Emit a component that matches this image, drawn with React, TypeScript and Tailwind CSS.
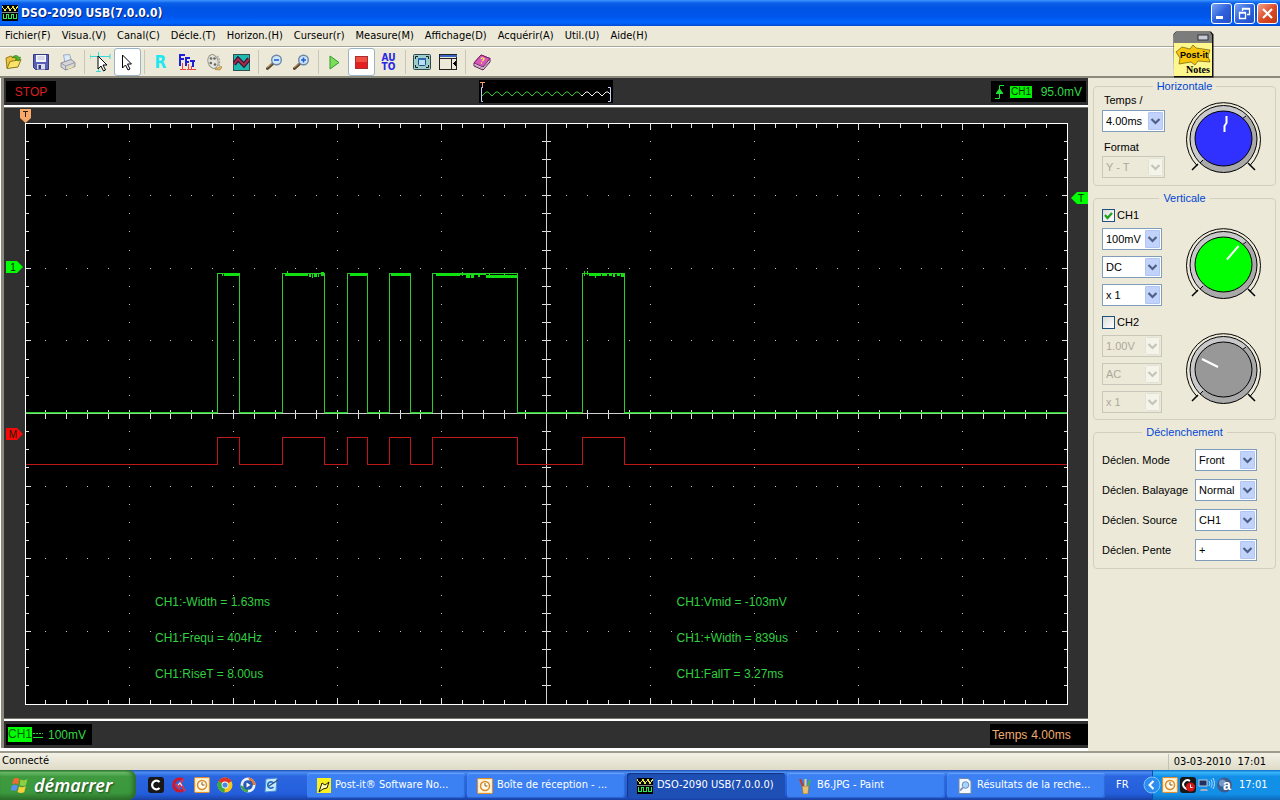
import { ReactNode, useState } from "react";
import clsx from "clsx";

const PLOT_W = 1043;
const PLOT_H = 582;
const DIV_X = 10;
const DIV_Y = 8;

const menus = [
  "Fichier(F)",
  "Visua.(V)",
  "Canal(C)",
  "Décle.(T)",
  "Horizon.(H)",
  "Curseur(r)",
  "Measure(M)",
  "Affichage(D)",
  "Acquérir(A)",
  "Util.(U)",
  "Aide(H)",
];

const measures = [
  ["CH1:-Width = 1.63ms", "CH1:Vmid = -103mV"],
  ["CH1:Frequ = 404Hz", "CH1:+Width = 839us"],
  ["CH1:RiseT = 8.00us", "CH1:FallT = 3.27ms"],
];

// [rise, fall] of every pulse
const pulses = [
  [192, 214],
  [257, 299],
  [322, 342],
  [364, 385],
  [407, 492],
  [557, 599],
];

// noise on the pulse tops: x, y, width, height
const noise = [
  [199, 150, 15, 3],
  [197, 151, 1, 2],
  [260, 150, 17, 3],
  [262, 148, 1, 3],
  [277, 151, 6, 2],
  [284, 150, 2, 4],
  [287, 150, 1, 5],
  [289, 151, 3, 3],
  [293, 150, 1, 4],
  [296, 149, 3, 4],
  [325, 150, 17, 3],
  [366, 150, 19, 3],
  [411, 150, 24, 3],
  [437, 149, 1, 4],
  [435, 151, 26, 1],
  [441, 152, 4, 3],
  [446, 152, 3, 3],
  [453, 152, 2, 2],
  [461, 152, 31, 3],
  [464, 150, 1, 3],
  [479, 150, 1, 3],
  [559, 148, 1, 5],
  [562, 148, 1, 4],
  [564, 150, 12, 3],
  [570, 151, 1, 4],
  [577, 151, 5, 2],
  [584, 150, 3, 3],
  [588, 151, 2, 3],
  [592, 150, 3, 3],
  [596, 151, 3, 3],
];

function pulsePath(base: number, top: number) {
  let d = `M1 ${base}`;
  for (const [a, b] of pulses) {
    d += `H${a + 0.5}V${top}H${b + 0.5}V${base}`;
  }
  return d + `H${PLOT_W - 1}`;
}

function Graticule() {
  const dx = (PLOT_W - 1) / (DIV_X * 5);
  const dy = (PLOT_H - 1) / (DIV_Y * 4);
  const xs = Array.from({ length: DIV_X * 5 - 1 }, (_, i) => i + 1);
  const ys = Array.from({ length: DIV_Y * 4 - 1 }, (_, i) => i + 1);
  let ticks = "";
  let dots = "";
  for (const i of xs) {
    const x = Math.floor(i * dx);
    const len = i % 5 === 0 ? 6 : 4;
    ticks += `M${x} 1h1v${len}h-1zM${x} ${PLOT_H - 1 - len}h1v${len}h-1zM${x} 287h1v9h-1z`;
    for (let r = 1; r < DIV_Y; r++) {
      dots += `M${x} ${Math.floor(r * 4 * dy)}h1v1h-1z`;
    }
  }
  for (const j of ys) {
    const y = Math.floor(j * dy);
    const len = j % 4 === 0 ? 5 : 3;
    ticks += `M1 ${y}h${len}v1h-${len}zM${PLOT_W - 1 - len} ${y}h${len}v1h-${len}zM517 ${y}h9v1h-9z`;
    for (let c = 1; c < DIV_X; c++) {
      dots += `M${Math.floor(c * 5 * dx)} ${y}h1v1h-1z`;
    }
  }
  return (
    <>
      <path d={dots} fill="#c8c8c8" />
      <path d={ticks} fill="#e0e0e0" />
      <path d={`M521 0h1v${PLOT_H}h-1zM0 290h${PLOT_W}v1H0z`} fill="#d0d0d0" />
      <rect x=".5" y=".5" width={PLOT_W - 1} height={PLOT_H - 1} fill="none" stroke="#fff" />
    </>
  );
}

function Plot() {
  const edges = [1, ...pulses.flat(), PLOT_W - 1];
  return (
    <svg
      viewBox={`0 0 ${PLOT_W} ${PLOT_H}`}
      className="block h-auto w-full bg-black"
      shapeRendering="crispEdges"
    >
      <Graticule />
      {edges.map((x, i) =>
        i % 2 === 0 ? (
          <rect key={x} x={x} y="290" width={edges[i + 1] - x} height="1" fill="#7fe07f" />
        ) : null,
      )}
      <path d={pulsePath(341.5, 314.5)} fill="none" stroke="#c01818" />
      <path d={pulsePath(289.5, 150.5)} fill="none" stroke="#2ccc2c" />
      {noise.map(([x, y, w, h]) => (
        <rect key={`${x}-${y}`} x={x} y={y} width={w} height={h} fill="#10e010" />
      ))}
    </svg>
  );
}

function Marker({ label, fill, flip }: { label: string; fill: string; flip?: boolean }) {
  return (
    <svg width="17" height="12" viewBox="0 0 17 12" className="block">
      <path d={flip ? "M17 0H6L0 6l6 6h11z" : "M0 0h11l6 6-6 6H0z"} fill={fill} />
      <text
        x={flip ? 10 : 7}
        y="10"
        fontSize="10"
        textAnchor="middle"
        fontFamily="Liberation Sans, sans-serif"
        fill="#102000"
      >
        {label}
      </text>
    </svg>
  );
}

function Knob({ color, hand }: { color: string; hand: string }) {
  return (
    <svg width="76" height="72" viewBox="0 0 76 72" className="block shrink-0">
      <circle cx="37.5" cy="37" r="33.5" fill="#c9c9cb" />
      <path d="M61.2 13.3A33.5 33.5 0 0 1 13.8 60.7z" fill="#a9a9a9" />
      <circle cx="37.5" cy="37" r="33.5" fill="none" stroke="#000" />
      <path d="M11 63.5A37 37 0 1 1 64 63.5" fill="none" stroke="#000" />
      <path d="M6 68l6-6M69 68l-7-7" stroke="#000" strokeWidth="1.5" />
      <path d="M60 14l-4 3M14 61l3-3" stroke="#000" />
      <ellipse cx="37.5" cy="36.500" rx="28.5" ry="27.5" fill={color} stroke="#000" />
      <path d={hand} stroke="#fff" strokeWidth="2" fill="none" />
    </svg>
  );
}

type ComboProps = {
  id: string;
  label?: string;
  options: string[];
  width: string;
  disabled?: boolean;
};

function Combo({ id, label, options, width, disabled }: ComboProps) {
  return (
    <div
      className={clsx(
        "grid h-[22px] border",
        width,
        disabled ? "border-[#c9c7ba] bg-[#ece9d8]" : "border-[#7f9db9] bg-white",
      )}
    >
      <select
        id={id}
        aria-label={label}
        disabled={disabled}
        className="col-start-1 row-start-1 w-full appearance-none bg-transparent pl-[3px] text-[11px] leading-5 text-black opacity-100 outline-none disabled:text-[#aca899]"
      >
        {options.map((option) => (
          <option key={option}>{option}</option>
        ))}
      </select>
      <svg
        viewBox="0 0 15 18"
        className="pointer-events-none col-start-1 row-start-1 m-px h-[18px] w-[15px] justify-self-end"
      >
        <rect width="15" height="18" rx="1" fill={disabled ? "#f5f4ea" : "#c1d3fb"} />
        <rect
          x=".5"
          y=".5"
          width="14"
          height="17"
          rx="1"
          fill="none"
          stroke={disabled ? "#e3e1d3" : "#b0c5f3"}
        />
        <path
          d="M3.5 7l4 4 4-4"
          fill="none"
          stroke={disabled ? "#c6c4b6" : "#4d6185"}
          strokeWidth="2.2"
        />
      </svg>
    </div>
  );
}

function Group({ title, children }: { title: string; children: ReactNode }) {
  return (
    <fieldset className="rounded border border-[#d0d0bf] px-2">
      <legend className="mx-auto px-1 text-[11px] leading-[14px] text-[#0046d5]">{title}</legend>
      {children}
    </fieldset>
  );
}

function Check({ id, label, on }: { id: string; label: string; on: boolean }) {
  const [checked, setChecked] = useState(on);
  return (
    <div className="flex h-[13px] items-center gap-[2px]">
      <span className="grid size-[13px]">
        <input
          id={id}
          type="checkbox"
          checked={checked}
          onChange={(e) => setChecked(e.target.checked)}
          className="col-start-1 row-start-1 size-[13px] appearance-none border border-[#1c5180] bg-linear-to-br from-[#dcdcd7] to-white"
        />
        {checked && (
          <svg viewBox="0 0 13 13" className="pointer-events-none col-start-1 row-start-1 size-[13px]">
            <path d="M3 6l2.5 3L10 4" fill="none" stroke="#21a121" strokeWidth="2.2" />
          </svg>
        )}
      </span>
      <label htmlFor={id} className="text-[11px]">
        {label}
      </label>
    </div>
  );
}

function ScopeIcon({ size = 16 }: { size?: number }) {
  return (
    <svg width={size} height={size} viewBox="0 0 16 16" className="shrink-0" shapeRendering="crispEdges">
      <rect width="16" height="16" fill="#000" />
      <path d="M0 1l3 5 3-5 2 5 3-5 2 5 3-5" fill="none" stroke="#e8e840" />
      <path d="M0 7.500h16" stroke="#888" />
      <path d="M1.500 9v4h3V9h2v4h3V9h2v4h3V9" fill="none" stroke="#2cf050" />
    </svg>
  );
}

function ClockIcon() {
  return (
    <svg width="16" height="16" viewBox="0 0 16 16" className="shrink-0">
      <rect x=".5" y=".5" width="15" height="15" rx="1" fill="#fbe7bd" stroke="#e38d2c" />
      <rect x="2" y="2" width="12" height="12" fill="#fff6dc" />
      <circle cx="8" cy="8" r="4.500" fill="#fffbe8" stroke="#d98a2b" strokeWidth="1.500" />
      <path d="M8 5v3h2.500" fill="none" stroke="#8a5a20" />
    </svg>
  );
}

function Arrow() {
  return (
    <path
      d="M0 0v13l3-3 2.500 5 2-1-2.500-5h4z"
      fill="#fff"
      stroke="#000"
      strokeWidth="1"
    />
  );
}

function Tool({ name, active, children }: { name: string; active?: boolean; children: ReactNode }) {
  return (
    <button
      type="button"
      aria-label={name}
      className={clsx(
        "flex h-7 w-[27px] items-center justify-center rounded-[3px]",
        active && "border border-[#98b5c9] bg-white",
      )}
    >
      {children}
    </button>
  );
}

function Sep() {
  return (
    <div className="flex h-6 w-[6px] justify-center">
      <div className="w-px bg-[#c9c6b8]" />
    </div>
  );
}

function ZoomGlass({ plus }: { plus?: boolean }) {
  return (
    <svg width="17" height="17" viewBox="0 0 17 17">
      <path d="M1.500 14.500L7 9.500" stroke="#5b4630" strokeWidth="3" strokeLinecap="round" />
      <path d="M1.500 13.500L6 9.500" stroke="#c9a36a" strokeWidth="1" />
      <circle cx="10.500" cy="6" r="4.800" fill="#cfe6fb" stroke="#6d87a8" strokeWidth="1.400" />
      <path d={plus ? "M8 6h5M10.500 3.500v5" : "M8 6h5"} stroke="#1f5fd0" strokeWidth="1.600" />
    </svg>
  );
}

function Toolbar() {
  return (
    <div className="flex h-7 items-center font-['DejaVu_Sans_Condensed','Noto_Sans',sans-serif]">
      <Tool name="Ouvrir">
        <svg width="17" height="16" viewBox="0 0 17 16">
          <path d="M1 4l5-2 2 1.500 4-.5v10L2 14z" fill="#e9c441" stroke="#a07a14" />
          <path d="M2 14.500L5 7.500l11-2-3 7.500z" fill="#fbe36a" stroke="#8f7a1c" />
          <path d="M7 4c2-3.500 6-3 7-.5l1.500-.5-1.500 4-4-2 1.500-.5C11 3 9 3 7 4z" fill="#4fb52c" stroke="#2e7a14" strokeWidth=".6" />
        </svg>
      </Tool>
      <Tool name="Enregistrer">
        <svg width="16" height="16" viewBox="0 0 16 16">
          <path d="M.5.500h15v15h-13l-2-2z" fill="#5a5fb8" stroke="#35397f" />
          <rect x="3" y="1" width="10" height="7" fill="#f3f5fb" />
          <path d="M4.500 3h7M4.500 5h7" stroke="#b8bdd8" />
          <rect x="4" y="10" width="8" height="5.500" fill="#d9dced" />
          <rect x="5.500" y="11" width="2.500" height="4" fill="#35397f" />
        </svg>
      </Tool>
      <Tool name="Imprimer">
        <svg width="16" height="17" viewBox="0 0 16 17">
          <path d="M3.500 1l6-.5 2 6-6.500 2z" fill="#dcebfc" stroke="#8c9cb4" strokeWidth=".8" />
          <path d="M1 9l10-3.500 4 3v4L5.500 16 1 13z" fill="#d5d5da" stroke="#7c7c86" strokeWidth=".8" />
          <path d="M1 9l4.500 3L15 8.500M5.500 12v4" fill="none" stroke="#8c8c96" strokeWidth=".8" />
          <path d="M8 13.500l5-1.800v1.500L8 15z" fill="#f6e58a" />
        </svg>
      </Tool>
      <Sep />
      <Tool name="Curseur croisé">
        <svg width="21" height="21" viewBox="0 0 21 21">
          <path d="M0 4.500h20M8.500 0v20M0 2v5M20 2v5M6 19.500h5" stroke="#3cd8d8" />
          <g transform="translate(8 4)">
            <Arrow />
          </g>
        </svg>
      </Tool>
      <Tool name="Curseur" active>
        <svg width="11" height="17" viewBox="-.5 -1 11 17">
          <Arrow />
        </svg>
      </Tool>
      <Sep />
      <Tool name="Référence">
        <span className="text-[17px] leading-none font-bold text-[#20e8f0]">R</span>
      </Tool>
      <Tool name="FFT">
        <svg width="17" height="16" viewBox="0 0 17 16" shapeRendering="crispEdges">
          <path d="M1 15.500h6M3.500 9v6M9.500 10v6M12.500 12v4M8 15.500h9" stroke="#f04040" />
          <path
            d="M1 12V1h5M1 5h4M7 12V4h4M7 7.500h3M11 6.500h5M13.500 6.500V13"
            fill="none"
            stroke="#2020d8"
            strokeWidth="2"
          />
        </svg>
      </Tool>
      <Tool name="Film">
        <svg width="18" height="17" viewBox="0 0 18 17">
          <path d="M9 14c3 2 4-3 7-1l-2 3-5-.5z" fill="#e8b862" stroke="#9a7430" strokeWidth=".6" />
          <ellipse cx="7" cy="7.500" rx="5" ry="7" fill="#e4e4de" stroke="#99998c" transform="rotate(-15 7 7.500)" />
          <circle cx="5" cy="4.500" r="1.300" fill="#68685e" />
          <circle cx="8.500" cy="4.500" r="1.300" fill="#68685e" />
          <circle cx="4.800" cy="9" r="1.300" fill="#68685e" />
          <circle cx="9" cy="10.500" r="1.300" fill="#68685e" />
          <path d="M11 2c3 2 3 7 1.500 11" fill="none" stroke="#a8a89c" strokeWidth="1.500" strokeDasharray="2 1" />
        </svg>
      </Tool>
      <Tool name="Filtre">
        <svg width="17" height="17" viewBox="0 0 17 17">
          <rect x=".5" y=".5" width="16" height="16" fill="#1fb9b0" stroke="#31504e" />
          <path d="M1 10l4-5 6 6 5-6" fill="none" stroke="#301838" strokeWidth="4.500" />
          <path d="M1 10l4-5 6 6 5-6" fill="none" stroke="#b02848" strokeWidth="2" />
        </svg>
      </Tool>
      <Sep />
      <Tool name="Zoom arrière">
        <ZoomGlass />
      </Tool>
      <Tool name="Zoom avant">
        <ZoomGlass plus />
      </Tool>
      <Sep />
      <Tool name="Démarrer">
        <svg width="11" height="15" viewBox="0 0 11 15">
          <path d="M1 1l9 6.500-9 6.500z" fill="#7ede5c" stroke="#2f9a2c" />
        </svg>
      </Tool>
      <Tool name="Arrêter" active>
        <svg width="13" height="13" viewBox="0 0 13 13">
          <rect x=".5" y=".5" width="12" height="12" fill="#e22020" stroke="#a83030" />
          <path d="M1 1h11v5H1z" fill="#f05040" />
        </svg>
      </Tool>
      <Tool name="Auto">
        <span className="text-[10px] leading-[9px] font-bold text-[#2828e0]">
          AU
          <br />
          TO
        </span>
      </Tool>
      <Sep />
      <Tool name="Plein écran">
        <svg width="18" height="16" viewBox="0 0 18 16">
          <rect x=".5" y=".5" width="17" height="15" rx="1" fill="#9ccccb" stroke="#304848" />
          <path d="M2.500 5V2.500H5M13 2.500h2.500V5M15.500 11v2.500H13M5 13.500H2.500V11" fill="none" stroke="#102020" />
          <rect x="5.500" y="4.500" width="7" height="7" rx="1" fill="#b8e0f4" stroke="#204878" />
          <path d="M5 5h8" stroke="#2c68b0" strokeWidth="2" />
        </svg>
      </Tool>
      <Tool name="Panneau">
        <svg width="19" height="17" viewBox="0 0 19 17" shapeRendering="crispEdges">
          <rect x=".5" y=".5" width="17" height="15" fill="#ece9d8" stroke="#222" />
          <path d="M1 1.500h17" stroke="#3868c8" strokeWidth="2" />
          <path d="M1 4.500h17M12.500 4v12" stroke="#222" />
          <path d="M17 6v7l-3-3.500z" fill="#000" />
        </svg>
      </Tool>
      <Sep />
      <Tool name="Aide">
        <svg width="18" height="17" viewBox="0 0 18 17">
          <path d="M1 9l7-8 9 3.500V8l-7 8-9-4z" fill="#f4f0f4" stroke="#5a1850" />
          <path d="M1 9l7-8 9 3.500L10 13z" fill="#d858b8" stroke="#7a2068" />
          <path d="M1.500 11L10 14.500 17 6.500" fill="none" stroke="#9a7a98" strokeWidth=".8" />
          <path d="M8 5c1-2 4-1 2.500 1L9 7M8 9h1" fill="none" stroke="#ffe860" strokeWidth="1.300" />
        </svg>
      </Tool>
    </div>
  );
}

function TitleBar() {
  return (
    <header className="flex h-[26px] items-center bg-[linear-gradient(#3d95ff_0%,#0a5fe8_12%,#0054e3_30%,#0055ea_60%,#0066ff_88%,#0048d0_100%)] px-[2px]">
      <ScopeIcon />
      <h1 className="ml-[3px] flex-1 text-[12px] font-bold text-white [text-shadow:1px_1px_#0a1f70]">
        DSO-2090 USB(7.0.0.0)
      </h1>
      <div className="flex gap-[2px]">
        <button
          type="button"
          aria-label="Réduire"
          className="size-[21px] rounded-[3px] border border-white bg-linear-to-br from-[#7ba4f4] via-[#2f62dc] to-[#2250c8]"
        >
          <svg viewBox="0 0 19 19">
            <path d="M4 13.500h7" stroke="#fff" strokeWidth="3" />
          </svg>
        </button>
        <button
          type="button"
          aria-label="Restaurer"
          className="size-[21px] rounded-[3px] border border-white bg-linear-to-br from-[#7ba4f4] via-[#2f62dc] to-[#2250c8]"
        >
          <svg viewBox="0 0 19 19" fill="none" stroke="#fff">
            <path d="M7.500 7V4.500h7v6H12M7 5h8" strokeWidth="1.300" />
            <path d="M4.500 8.500h6v6h-6zM4 9h7" strokeWidth="1.300" />
          </svg>
        </button>
        <button
          type="button"
          aria-label="Fermer"
          className="size-[21px] rounded-[3px] border border-white bg-linear-to-br from-[#f0a088] via-[#dc4c28] to-[#c03810]"
        >
          <svg viewBox="0 0 19 19">
            <path d="M5 5l9 9M14 5l-9 9" stroke="#fff" strokeWidth="2.200" />
          </svg>
        </button>
      </div>
    </header>
  );
}

function PostIt() {
  return (
    <svg width="41" height="47" viewBox="0 0 41 47" className="absolute top-[31px] right-[66px]">
      <path d="M3 .500h35l2.500 3V46.500H1L.5 3z" fill="#111" />
      <path d="M3 1h34l2 3v8H1V3z" fill="#7c7c7c" />
      <rect x="25" y="4" width="10" height="5" fill="#c8ccd8" stroke="#333" />
      <rect x="1" y="12" width="38" height="33" fill="#fdf78e" />
      <path d="M3 21l6-5 8 2 3-4 3 3 14 2-2 6 2 6-12-1-3 4-4-3-12 2 1-6z" fill="#f6c50c" stroke="#6a5a10" strokeWidth=".7" />
      <text x="7" y="27" fontSize="9" fontWeight="bold" fontFamily="Liberation Sans, sans-serif">
        Post-it
      </text>
      <text x="13" y="42" fontSize="10" fontWeight="bold" fontFamily="Liberation Serif, serif">
        Notes
      </text>
    </svg>
  );
}

function MiniWave() {
  let wave = "";
  for (let x = 3; x < 132; x += 10) {
    wave += `${x === 3 ? "M" : "L"}${x} 16l4-4h2l4 4`;
  }
  return (
    <svg width="134" height="23" viewBox="0 0 134 23" className="block bg-black">
      <clipPath id="acquired">
        <rect width="102" height="23" />
      </clipPath>
      <clipPath id="pending">
        <rect x="102" width="29" height="23" />
      </clipPath>
      <path d={wave} fill="none" stroke="#28c828" clipPath="url(#acquired)" />
      <path d={wave} fill="none" stroke="#f0f0f0" clipPath="url(#pending)" />
      <path d="M4 7.500H2.500v14H4M129 7.500h2.500v14H129" fill="none" stroke="#c8d0f8" />
      <path d="M1 2.500h5M3.500 2v5" stroke="#f0a060" />
    </svg>
  );
}

function Scope() {
  return (
    <main className="min-w-0 flex-1 bg-white pl-1 text-xs">
      <div className="-ml-[3px] border-l-[3px] border-[#8b897b]">
        <div className="grid h-[27px] grid-cols-[1fr_auto_1fr] items-center bg-[#303030] px-[2px]">
          <div className="flex h-[21px] w-[50px] items-center justify-center bg-black text-[#d82020]">
            STOP
          </div>
          <MiniWave />
          <div className="flex h-[21px] w-[95px] items-center justify-self-end bg-black px-1 text-[#30d848]">
            <svg width="10" height="16" viewBox="0 0 10 16" className="mr-[5px]">
              <path d="M0 14.500h4.500v-13H9M1 9.500h7" fill="none" stroke="#20e030" />
              <path d="M1 9l3.500-5L8 9z" fill="#20e030" />
            </svg>
            <span className="bg-[#00f000] px-px text-[10px] leading-3 text-[#003000]">CH1</span>
            <span className="ml-auto">95.0mV</span>
          </div>
        </div>
        <div className="border-t-2 border-b-2 border-white">
          <div className="border-y border-[#77756a] bg-[#303030] pt-[15px] pr-[20px] pb-[13px] pl-[21px]">
            <div className="relative">
              <Plot />
              <div className="absolute inset-x-0 bottom-[23px] flex flex-col gap-[21px] leading-[15px] text-[#30d040]">
                {measures.map(([left, right]) => (
                  <div key={left} className="grid grid-cols-2">
                    <span className="pl-[130px]">{left}</span>
                    <span className="pl-[130px]">{right}</span>
                  </div>
                ))}
              </div>
              <svg width="11" height="14" viewBox="0 0 11 14" className="absolute -top-[14px] -left-[5px]">
                <path d="M0 0h11v9l-5.500 5L0 9z" fill="#f8a868" />
                <path d="M3 2.500h5M5.500 2v6" stroke="#302010" />
              </svg>
              <div className="absolute top-[138px] -left-[19px]">
                <Marker label="1" fill="#00ff00" />
              </div>
              <div className="absolute top-[305px] -left-[19px]">
                <Marker label="M" fill="#f80808" />
              </div>
              <div className="absolute top-[69px] -right-[20px]">
                <Marker label="T" fill="#00ff00" flip />
              </div>
            </div>
          </div>
        </div>
        <div className="flex h-[27px] items-center justify-between bg-[#303030] pl-[2px]">
          <div className="flex h-[21px] w-[86px] items-center bg-black pl-[2px] text-[#30d848]">
            <span className="bg-[#00ff00] leading-[15px] text-[#006000]">CH1</span>
            <svg width="11" height="8" viewBox="0 0 11 8" className="mr-1 ml-px" shapeRendering="crispEdges">
              <path d="M0 2.500h10" stroke="#20e030" strokeDasharray="2 1" />
              <path d="M0 6.500h10" stroke="#20e030" />
            </svg>
            100mV
          </div>
          <div className="flex h-[21px] w-[98px] items-center gap-1 bg-black pl-[2px] text-[#f0ac70]">
            <span>Temps</span>
            <span>4.00ms</span>
          </div>
        </div>
      </div>
    </main>
  );
}

const triggers = [
  { id: "mode", label: "Déclen. Mode", options: ["Front", "Alterné"] },
  { id: "sweep", label: "Déclen. Balayage", options: ["Normal", "Auto", "Mono"] },
  { id: "source", label: "Déclen. Source", options: ["CH1", "CH2"] },
  { id: "slope", label: "Déclen. Pente", options: ["+", "-"] },
];

function ControlPanel() {
  return (
    <aside className="flex w-[192px] shrink-0 flex-col gap-[5px] pt-px pr-1 pl-[5px]">
      <Group title="Horizontale">
        <div className="flex justify-between pr-[5px] pb-[7px]">
          <div className="flex flex-col text-[11px] leading-[14px]">
            <label htmlFor="timebase" className="mb-[3px] pl-[2px]">
              Temps /
            </label>
            <Combo id="timebase" options={["4.00ms", "2.00ms"]} width="w-[63px]" />
            <label htmlFor="format" className="mt-2 mb-[2px] pl-[2px]">
              Format
            </label>
            <Combo id="format" options={["Y - T"]} width="w-[63px]" disabled />
          </div>
          <div className="pt-[9px]">
            <Knob color="#3030ff" hand="M40.500 14v7l-2 3v6" />
          </div>
        </div>
      </Group>
      <Group title="Verticale">
        <div className="flex justify-between pt-1 pr-[5px] pb-[6px]">
          <div className="flex flex-col gap-[6px]">
            <Check id="ch1" label="CH1" on />
            <Combo id="ch1-volts" label="CH1 calibre" options={["100mV", "200mV"]} width="w-[60px]" />
            <Combo id="ch1-coupling" label="CH1 couplage" options={["DC", "AC"]} width="w-[60px]" />
            <Combo id="ch1-probe" label="CH1 sonde" options={["x 1", "x 10"]} width="w-[60px]" />
            <div className="mt-1">
              <Check id="ch2" label="CH2" on={false} />
            </div>
            <Combo id="ch2-volts" label="CH2 calibre" options={["1.00V"]} width="w-[60px]" disabled />
            <Combo id="ch2-coupling" label="CH2 couplage" options={["AC"]} width="w-[60px]" disabled />
            <Combo id="ch2-probe" label="CH2 sonde" options={["x 1"]} width="w-[60px]" disabled />
          </div>
          <div className="flex flex-col gap-[33px] pt-[19px]">
            <Knob color="#00ff00" hand="M52.500 18L41 31.500" />
            <Knob color="#989898" hand="M16 26l16 8" />
          </div>
        </div>
      </Group>
      <Group title="Déclenchement">
        <div className="flex flex-col gap-2 pt-[10px] pr-[10px] pb-[7px]">
          {triggers.map((t) => (
            <div key={t.id} className="flex items-center justify-between text-[11px]">
              <label htmlFor={t.id} className="whitespace-nowrap">
                {t.label}
              </label>
              <Combo id={t.id} options={t.options} width="w-[62px]" />
            </div>
          ))}
        </div>
      </Group>
    </aside>
  );
}

function QuickLaunch() {
  return (
    <div className="flex w-[171px] items-center gap-[7px] pl-3">
      <svg width="16" height="16" viewBox="0 0 16 16">
        <rect width="16" height="16" rx="3" fill="#181818" />
        <path d="M11.500 5a4.300 4.300 0 1 0 0 6" fill="none" stroke="#fff" strokeWidth="2.200" />
      </svg>
      <svg width="16" height="16" viewBox="0 0 16 16">
        <path d="M12 3a6 6 0 1 0 0 10" fill="none" stroke="#d01828" strokeWidth="3" />
        <path d="M5 7l3 4 2-4 4 7M12 2l-2 4" fill="none" stroke="#e83040" strokeWidth="1.800" />
        <path d="M7 8l2-2 2 3" fill="none" stroke="#e8e8f8" strokeWidth="1.200" />
      </svg>
      <ClockIcon />
      <svg width="16" height="16" viewBox="0 0 16 16">
        <circle cx="8" cy="8" r="7.500" fill="#f4c820" />
        <path d="M8 8L1.500 4.300A7.500 7.500 0 0 1 14.500 4.300z" fill="#e03428" />
        <path d="M8 8L1.500 4.300A7.500 7.500 0 0 0 7.500 15.500z" fill="#38a848" />
        <circle cx="8" cy="8" r="3.400" fill="#fff" />
        <circle cx="8" cy="8" r="2.600" fill="#4888e0" />
      </svg>
      <svg width="16" height="16" viewBox="0 0 16 16">
        <circle cx="8" cy="8" r="7.500" fill="#e8f0fc" />
        <path d="M8 .5A7.500 7.500 0 0 1 15.500 8H12z" fill="#e07830" />
        <path d="M.5 8A7.500 7.500 0 0 0 8 15.500V12z" fill="#40a850" />
        <circle cx="8" cy="8" r="4.800" fill="#2858b8" />
        <path d="M6.500 5.500v5l4-2.500z" fill="#fff" />
      </svg>
      <svg width="16" height="16" viewBox="0 0 16 16">
        <path d="M3 2l11-1-1 13-11 1z" fill="#c8e8fc" stroke="#4890d0" />
        <path d="M10.500 6a3.200 3.200 0 1 0 0 4" fill="none" stroke="#2070c8" strokeWidth="1.800" />
        <path d="M6 9l9-6" stroke="#305080" strokeWidth="1.400" />
      </svg>
    </div>
  );
}

const tasks = [
  {
    title: "Post-it® Software No...",
    icon: (
      <svg width="14" height="15" viewBox="0 0 14 15" className="shrink-0">
        <rect width="14" height="15" fill="#f8f020" />
        <path d="M2 14l3-9 3 2 4-3-2 6-4 1z" fill="#fffbb0" stroke="#202000" />
      </svg>
    ),
  },
  { title: "Boîte de réception - ...", icon: <ClockIcon /> },
  { title: "DSO-2090 USB(7.0.0.0)", icon: <ScopeIcon />, active: true },
  {
    title: "B6.JPG - Paint",
    icon: (
      <svg width="16" height="16" viewBox="0 0 16 16" className="shrink-0">
        <path d="M5 8h7l-1 8H6z" fill="#e8c070" stroke="#906830" strokeWidth=".7" />
        <path d="M6 8L3 1" stroke="#c83820" strokeWidth="2" />
        <path d="M8.500 8V1" stroke="#e8d080" strokeWidth="2" />
        <path d="M11 8l2-6" stroke="#48b048" strokeWidth="2" />
      </svg>
    ),
  },
  {
    title: "Résultats de la reche...",
    icon: (
      <svg width="16" height="16" viewBox="0 0 16 16" className="shrink-0">
        <path d="M2 .500h9l3 3v12H2z" fill="#f4f8ff" stroke="#7888a8" />
        <circle cx="8.500" cy="7" r="3.300" fill="#a8d4f8" stroke="#6890c0" />
        <path d="M6 9.500l-3 3" stroke="#8898b8" strokeWidth="1.800" />
      </svg>
    ),
  },
];

function Taskbar() {
  return (
    <footer className="flex h-[30px] bg-[linear-gradient(#1f4fb8_0%,#4a8df0_8%,#2b66e0_20%,#245edb_80%,#1941a5_100%)] text-[11px] text-white">
      <button
        type="button"
        className="flex w-[136px] items-center gap-[5px] rounded-r-lg bg-[linear-gradient(#2f7a2f_0%,#6cbf6c_8%,#3f9a3f_22%,#3c983c_75%,#2c702c_100%)] pl-[11px] shadow-[inset_-3px_0_4px_#2a6a2a]"
      >
        <svg width="18" height="18" viewBox="0 0 18 18">
          <path d="M2.500 3c2-1.500 4-1.300 6 0L7 8.500c-2-1.200-4-1.200-6 0z" fill="#f06a30" />
          <path d="M9.500 3.500c2 1.300 4.500 1 7-.5L15 9c-2 1.300-4.500 1.500-6.500 0z" fill="#8cd040" />
          <path d="M.8 9.800c2-1.300 4-1.200 6 0L5.300 15c-2-1.200-4-1-6 0z" fill="#5890f0" />
          <path d="M8 10.500c2 1.300 4.500 1 6.800-.5l-1.500 6c-2 1.300-4.800 1.200-6.800 0z" fill="#f8d038" />
        </svg>
        <span className="font-['Noto_Sans',sans-serif] text-[18px] leading-6 font-semibold italic [text-shadow:1px_1px_2px_#1c4a1c]">
          démarrer
        </span>
      </button>
      <QuickLaunch />
      <nav className="flex min-w-0 flex-1 items-center gap-[2px]">
        {tasks.map((task) => (
          <button
            key={task.title}
            type="button"
            className={clsx(
              "mt-px flex h-[25px] min-w-0 flex-1 items-center gap-1 rounded-[3px] pl-[10px] whitespace-nowrap",
              task.active
                ? "bg-[#1e4fb5] shadow-[inset_1px_1px_1px_#123580]"
                : "bg-[#3c81f3] shadow-[inset_0_1px_1px_#6aa2fa,inset_-1px_-1px_1px_#2a62cc]",
            )}
          >
            {task.icon}
            <span className="truncate">{task.title}</span>
          </button>
        ))}
      </nav>
      <span className="flex w-[38px] items-center pl-[11px]">FR</span>
      <div className="flex w-[137px] items-center">
        <button type="button" aria-label="Afficher les icônes" className="z-10 -mr-[9px]">
          <svg width="18" height="18" viewBox="0 0 18 18" className="block">
            <circle cx="9" cy="9" r="8" fill="#2c8cf0" stroke="#7cc4fc" />
            <path d="M10.500 5L6.500 9l4 4" fill="none" stroke="#fff" strokeWidth="2" />
          </svg>
        </button>
        <div className="flex h-full flex-1 items-center gap-[2px] border-l border-[#0c4cb0] bg-[linear-gradient(#0c6cc8_0%,#38b4f8_8%,#1290e8_22%,#1290e8_80%,#0f68b8_100%)] pl-[9px]">
          <ClockIcon />
          <svg width="16" height="16" viewBox="0 0 16 16">
            <rect width="16" height="16" rx="3" fill="#181818" />
            <path d="M10 4a4.300 4.300 0 1 0 0 7" fill="none" stroke="#fff" strokeWidth="2" />
            <circle cx="10.500" cy="10" r="4.500" fill="#d81818" />
            <path d="M10.500 7.500v3h2" fill="none" stroke="#fff" />
          </svg>
          <svg width="17" height="16" viewBox="0 0 17 16">
            <rect x="1" y="3" width="8" height="6" fill="#203060" stroke="#c0c8d8" />
            <path d="M3 12h6l1 2H2z" fill="#a8b0c0" />
            <path d="M11 4c1 2 1 3 0 5M13 2.500c1.500 3 1.500 5 0 8M15 1c2 4 2 7 0 11" fill="none" stroke="#b8d8f8" />
          </svg>
          <svg width="16" height="16" viewBox="0 0 16 16">
            <circle cx="7.500" cy="8" r="7.500" fill="#3c5c90" />
            <circle cx="5.500" cy="6" r="3.500" fill="#7898c8" />
            <text x="6" y="13" fontSize="14" fontWeight="bold" fill="#fff" fontFamily="Liberation Sans, sans-serif">
              a
            </text>
          </svg>
          <time className="ml-1">17:01</time>
        </div>
      </div>
    </footer>
  );
}

export default function App() {
  return (
    <div className="relative flex min-h-screen flex-col bg-[#ece9d8] font-['DejaVu_Sans_Condensed','Noto_Sans',sans-serif] text-black">
      <TitleBar />
      <nav className="flex h-5 items-center gap-[11px] pl-[5px] text-[11px]">
        {menus.map((menu) => (
          <button key={menu} type="button" className="whitespace-nowrap">
            {menu}
          </button>
        ))}
      </nav>
      <div className="border-t border-b-2 border-t-[#a8a698] border-b-[#8b897b]">
        <div className="border-t border-white">
          <Toolbar />
        </div>
      </div>
      <div className="flex flex-1 font-['Liberation_Sans',Arial,sans-serif]">
        <Scope />
        <ControlPanel />
      </div>
      <div className="flex h-[19px] items-center border-t-2 border-[#9d9b8e] bg-linear-to-b from-[#f3f1e4] to-[#dedbc8] text-[11px]">
        <span className="flex-1 pl-[2px]">Connecté</span>
        <span className="border-l border-[#c5c2b2] pr-[14px] pl-[5px] leading-4 whitespace-pre">
          {"03-03-2010  17:01"}
        </span>
      </div>
      <Taskbar />
      <PostIt />
    </div>
  );
}
